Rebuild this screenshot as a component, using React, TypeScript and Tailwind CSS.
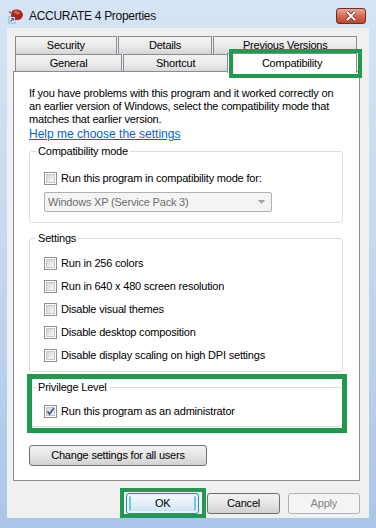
import React from "react";

const font = "font-['Liberation_Sans',Arial,sans-serif]";

function Tab({ label, w, selected }: { label: string; w: string; selected?: boolean }) {
  if (selected) {
    return (
      <div
        className={`${w} -ml-[2px] -mt-[1px] h-[20px] border border-b-0 border-[#898c95] bg-white flex items-center justify-center text-black relative z-10`}
      >
        {label}
      </div>
    );
  }
  return (
    <div
      className={`${w} h-[18px] border border-b-0 border-[#898c95] bg-gradient-to-b from-[#f3f3f3] via-[#ebebeb] to-[#d6d6d6] flex items-center justify-center text-black`}
    >
      {label}
    </div>
  );
}

function Check({ checked }: { checked?: boolean }) {
  return (
    <div className="w-[13px] h-[13px] border border-[#8e8f8f] bg-white p-[1px] shrink-0">
      <div className="w-full h-full border border-[#c6c6c6] bg-gradient-to-br from-[#d7d7d7] to-[#f8f8f8] relative">
        {checked && (
          <svg viewBox="0 0 9 9" className="absolute -left-[1px] -top-[1px] w-[9px] h-[9px]">
            <path d="M1.5 4.5 L3.5 7 L7.8 1.2" fill="none" stroke="#3d5693" strokeWidth="1.7" />
          </svg>
        )}
      </div>
    </div>
  );
}

function CheckRow({ label, checked }: { label: string; checked?: boolean }) {
  return (
    <div className="flex items-center h-[15px] gap-[4px]">
      <Check checked={checked} />
      <span>{label}</span>
    </div>
  );
}

function Group({ title, className, children }: { title: string; className?: string; children: React.ReactNode }) {
  return (
    <fieldset className={`border border-[#d5dfe5] rounded-[3px] px-[14px] min-w-0 ${className ?? ""}`}>
      <legend className="px-[2px] -ml-[8px] leading-[13px] text-black">{title}</legend>
      {children}
    </fieldset>
  );
}

function Button({ label, className, variant }: { label: string; className: string; variant?: "default" | "disabled" }) {
  const base = "h-[21px] rounded-[3px] border flex items-center justify-center";
  if (variant === "default") {
    return (
      <div className={`${base} ${className} border-[#3c7fb1] bg-[#e8f3fb] p-[2px]`}>
        <div className="w-full h-full rounded-[2px] bg-gradient-to-b from-[#f2f8fd] via-[#e3eff9] to-[#cde4f5] flex items-center justify-center border-x-[2px] border-[#6cc6ec]">
          {label}
        </div>
      </div>
    );
  }
  if (variant === "disabled") {
    return (
      <div className={`${base} ${className} border-[#adb2b5] bg-[#f4f4f4] text-[#838383]`}>{label}</div>
    );
  }
  return (
    <div
      className={`${base} ${className} border-[#707070] bg-gradient-to-b from-[#f2f2f2] via-[#e6e6e6] to-[#d1d1d1]`}
    >
      {label}
    </div>
  );
}

export default function App() {
  return (
    <div
      className={`${font} relative w-[376px] h-[528px] overflow-hidden bg-gradient-to-b from-[#d6e4f4] via-[#c3d7ef] to-[#abc6e8] text-[11px] tracking-[-0.2px] text-black flex flex-col`}
    >
      {/* title bar */}
      <div className="h-[28px] flex items-start pt-[8px] pl-[8px] pr-[10px] shrink-0">
        <svg viewBox="0 0 16 16" className="w-[16px] h-[16px] mr-[5px]">
          <path d="M4 3 C6 1 11 1 13 3 L15 6 C15 9 13 12 10 12 L5 12 C3 11 3 9 3 7 Z" fill="#a8261a" />
          <path d="M6 3 C8 2 11 3 12 5 L10 7 C9 6 7 5 6 6 Z" fill="#d9604f" />
          <path d="M3 4 L1 3 L2 6 Z" fill="#6e1810" />
          <rect x="1" y="9" width="6" height="6" fill="#fff" stroke="#6b7a8c" strokeWidth="0.6" />
          <path d="M2.5 13.5 L5.5 10.5 M3.5 10.5 L5.5 10.5 L5.5 12.5" stroke="#1f5fb8" strokeWidth="1.1" fill="none" />
        </svg>
        <span className="text-[12px] tracking-[-0.3px] leading-[17px] text-[#111]">ACCURATE 4 Properties</span>
        <div className="ml-auto w-[30px] h-[16px] rounded-[3px] border border-[#6b2f27] bg-gradient-to-b from-[#e6a797] via-[#d56a52] to-[#c2442c] flex items-center justify-center">
          <svg viewBox="0 0 12 10" className="w-[12px] h-[10px]">
            <path d="M2 1 L10 9 M10 1 L2 9" stroke="#5a2a22" strokeWidth="3.4" />
            <path d="M2 1 L10 9 M10 1 L2 9" stroke="#fff" strokeWidth="2" />
          </svg>
        </div>
      </div>

      {/* client area */}
      <div className="mx-[7px] mb-[10px] flex-1 bg-[#f0f0f0] flex flex-col pl-[6px] pr-[9px]">
        {/* tabs */}
        <div className="pt-[8px] pl-[2px] pr-[3px]">
          <div className="flex gap-[1px]">
            <Tab label="Security" w="w-[102px]" />
            <Tab label="Details" w="w-[95px]" />
            <Tab label="Previous Versions" w="w-[144px]" />
          </div>
          <div className="flex gap-[1px] h-[17px] items-start">
            <Tab label="General" w="w-[108px]" />
            <Tab label="Shortcut" w="w-[106px]" />
            <Tab label="Compatibility" w="w-[131px]" selected />
          </div>
        </div>

        {/* panel */}
        <div className="h-[410px] border border-[#898c95] bg-white pl-[15px] pr-[16px] pt-[15px] flex flex-col">
          <p className="leading-[13px]">
            If you have problems with this program and it worked correctly on an earlier version of Windows,
            select the compatibility mode that matches that earlier version.
          </p>
          <a className="mt-[2px] leading-[13px] text-[12px] tracking-normal text-[#0066cc] underline w-fit">
            Help me choose the settings
          </a>

          <Group title="Compatibility mode" className="mt-[4px] pb-[10px]">
            <div className="mt-[13px]">
              <CheckRow label="Run this program in compatibility mode for:" />
            </div>
            <div className="mt-[6px] w-[228px] h-[20px] border border-[#adb2b5] rounded-[2px] bg-[#f4f4f4] flex items-center pl-[3px] pr-[6px] text-[#6d6d6d]">
              <span>Windows XP (Service Pack 3)</span>
              <svg viewBox="0 0 7 4" className="ml-auto w-[7px] h-[4px]">
                <path d="M0 0 L7 0 L3.5 4 Z" fill="#a0a0a0" />
              </svg>
            </div>
          </Group>

          <Group title="Settings" className="mt-[9px] pb-[8px]">
            <div className="mt-[11px] flex flex-col gap-[8px]">
              <CheckRow label="Run in 256 colors" />
              <CheckRow label="Run in 640 x 480 screen resolution" />
              <CheckRow label="Disable visual themes" />
              <CheckRow label="Disable desktop composition" />
              <CheckRow label="Disable display scaling on high DPI settings" />
            </div>
          </Group>

          <Group title="Privilege Level" className="mt-[9px] pb-[7px]">
            <div className="mt-[10px]">
              <CheckRow label="Run this program as an administrator" checked />
            </div>
          </Group>

          <Button label="Change settings for all users" className="mt-[18px] w-[178px] h-[20px]" />
        </div>

        {/* dialog buttons */}
        <div className="mt-[12px] flex gap-[8px] pl-[113px]">
          <Button label="OK" className="w-[74px]" variant="default" />
          <Button label="Cancel" className="w-[73px]" />
          <Button label="Apply" className="w-[73px]" variant="disabled" />
        </div>
      </div>

      {/* green highlight annotations */}
      <div className="absolute left-[229px] top-[49px] w-[133px] h-[29px] border-[4px] border-[#1f9a4e] z-20" />
      <div className="absolute left-[27px] top-[374px] w-[320px] h-[59px] border-[5px] border-[#1f9a4e] z-20" />
      <div className="absolute left-[120px] top-[488px] w-[86px] h-[30px] border-[4px] border-[#1f9a4e] z-20" />
    </div>
  );
}
